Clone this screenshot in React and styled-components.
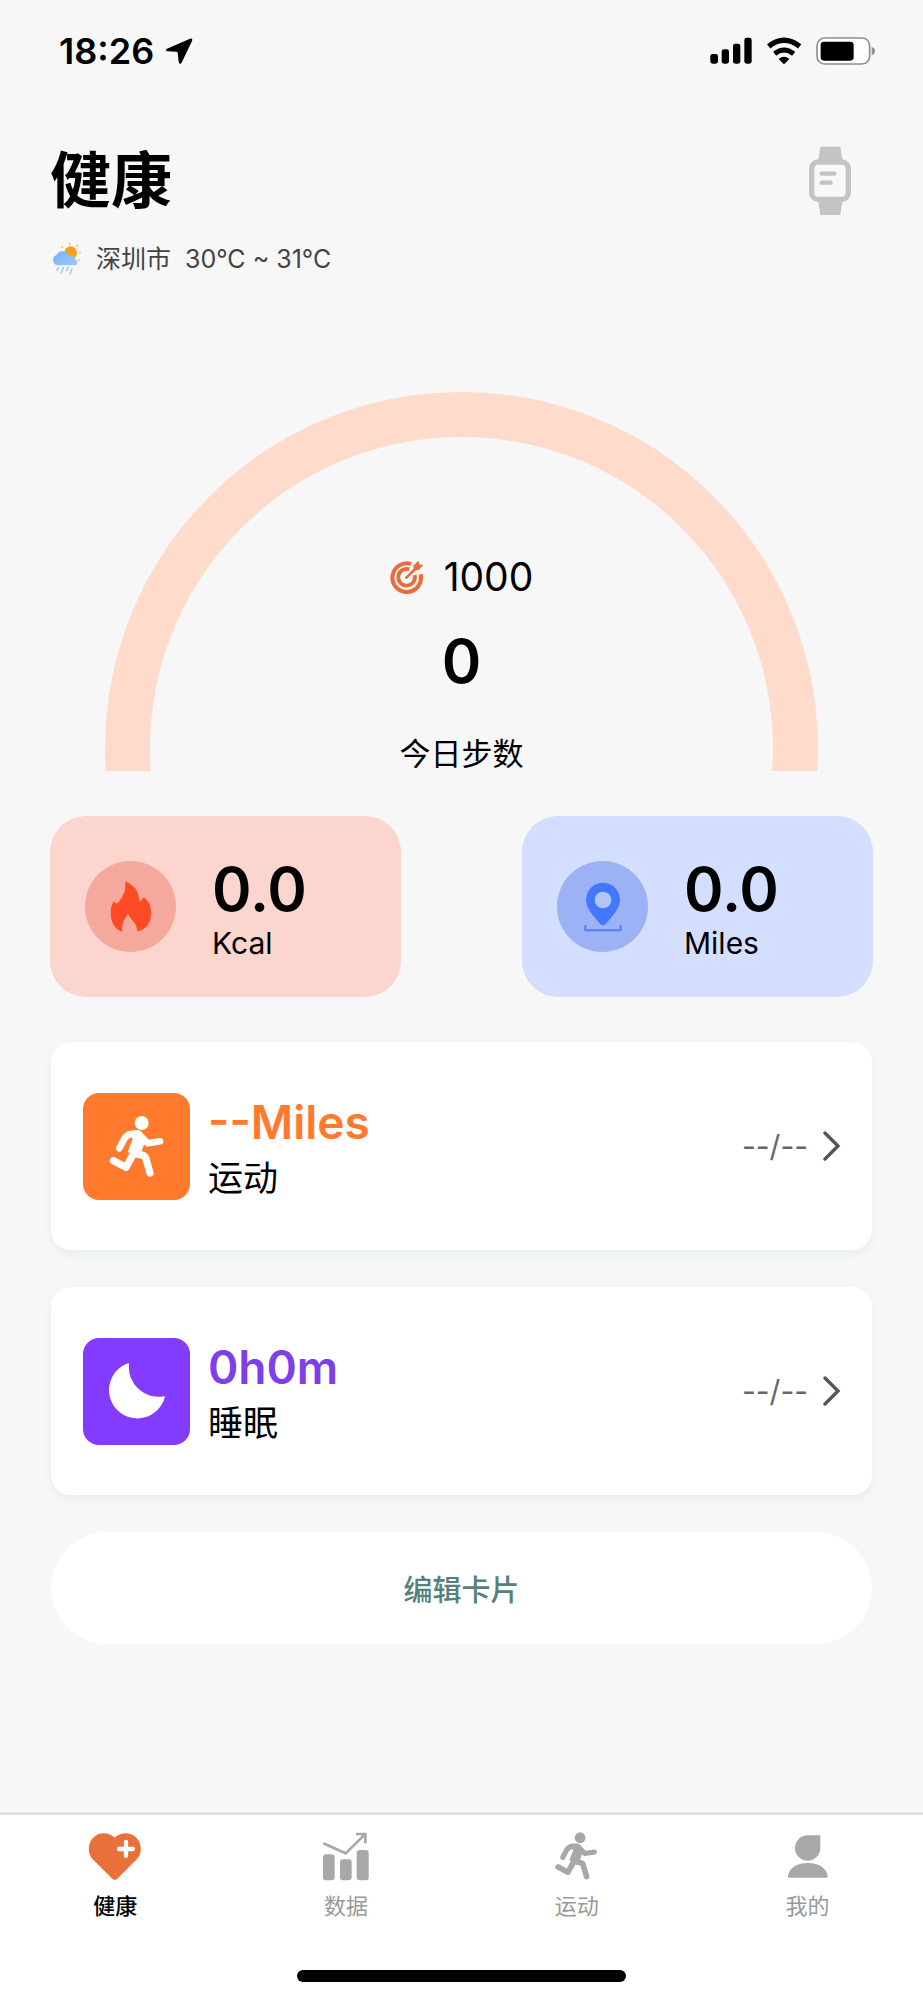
import styled, { createGlobalStyle } from "styled-components";

const GlobalStyle = createGlobalStyle`
  * {
    box-sizing: border-box;
  }
  body {
    margin: 0;
    background: #f7f7f7;
    color: #000;
    font-family: "Inter", "Noto Sans CJK SC", sans-serif;
  }
`;

/* ---------- icons ---------- */

const LocationIcon = () => (
  <svg width="28" height="28" viewBox="402 50 86 86" aria-hidden="true">
    <path d="M479 55Q488 53 485 62L453 129Q447 137 444 127L441 99Q440 95 436 95L410 94Q400 91 408 86Z" />
  </svg>
);

const SignalIcon = () => (
  <svg width="42" height="28" viewBox="61 51 126 84" aria-hidden="true">
    <rect x="62" y="102" width="23" height="29" rx="7" />
    <rect x="96" y="88" width="22" height="43" rx="7" />
    <rect x="130" y="71" width="22" height="60" rx="7" />
    <rect x="164" y="53" width="22" height="78" rx="7" />
  </svg>
);

const WifiIcon = () => (
  <svg width="36" height="28" viewBox="228 49 108 84" aria-hidden="true">
    <path d="M236 77Q282 41 329 77" fill="none" stroke="#000" strokeWidth="16" />
    <path d="M254 99Q282 77 311 99" fill="none" stroke="#000" strokeWidth="15" />
    <path d="M266 115Q282 101 298 115L284 129Q282 131 280 129Z" />
  </svg>
);

const BatteryIcon = () => (
  <svg width="60" height="28" viewBox="378 49 180 84" aria-hidden="true">
    <rect x="381" y="52" width="158" height="78" rx="23" fill="#fdfdfd" stroke="#8f8f8f" strokeWidth="5" />
    <rect x="392" y="63" width="99" height="57" rx="10" />
    <path d="M545 79Q555 82 555 91T545 104Z" fill="#8f8f8f" />
  </svg>
);

const WatchIcon = () => (
  <svg width="42" height="70" viewBox="354 379 126 210" aria-hidden="true">
    <path d="M388 381H448L455 425H381ZM381 540H455L448 586H388Z" fill="#c4c4c4" />
    <rect x="362" y="427" width="110" height="112" rx="20" fill="#f8f8f8" stroke="#c4c4c4" strokeWidth="16" />
    <path d="M392 462H430M392 489H419" stroke="#c4c4c4" strokeWidth="13" strokeLinecap="round" />
  </svg>
);

const WeatherIcon = () => (
  <svg width="30" height="34" viewBox="71 665 90 102" aria-hidden="true">
    <defs>
      <linearGradient id="cloud" x1="0" y1="0" x2="1" y2="1">
        <stop offset="0" stopColor="#74aef5" />
        <stop offset="1" stopColor="#9fcbfb" />
      </linearGradient>
    </defs>
    <circle cx="127" cy="697" r="19" fill="#f9a01b" />
    <g stroke="#f7b24a" strokeWidth="4" strokeLinecap="round">
      <path d="M124 669v2M101 680l2 2M147 675l-2 2M154 697h2M151 718l2 2" />
    </g>
    <path
      d="M89 735A16 16 0 0 1 85 704A20 20 0 0 1 122 707A14 14 0 0 1 141 717A10 10 0 0 1 142 735Z"
      fill="url(#cloud)"
    />
    <g stroke="#92c2f6" strokeWidth="4" strokeLinecap="round">
      <path d="M90 742l-4 8M105 742l-7 17M120 741l-5 10M131 746l-6 15" />
    </g>
  </svg>
);

const TargetIcon = () => (
  <svg width="34" height="34" viewBox="56 59 102 102" fill="none" stroke="#e56b40" aria-hidden="true">
    <circle cx="106" cy="111" r="35" stroke="#fdeccb" strokeWidth="8" />
    <path d="M119 71A43 43 0 1 0 148 102" strokeWidth="12" />
    <path d="M114 87A25 25 0 1 0 130 104" strokeWidth="11" />
    <path d="M105 112L136 82" strokeWidth="8" strokeLinecap="round" />
    <path d="M126 76L141 61L144 72L156 75L141 90L128 90Z" fill="#e56b40" stroke="none" />
  </svg>
);

const FlameIcon = () => (
  <svg width="42" height="52" viewBox="209 243 126 156" aria-hidden="true">
    <path
      d="M258 245C282 256 296 275 297 303C302 303 306 299 309 291C326 302 333 320 332 341C332 370 315 390 290 394C293 372 271 362 262 340C257 356 242 366 246 395C222 388 211 366 211 337C211 320 217 309 221 303C223 308 226 311 231 310C246 294 259 271 254 248Q255 244 258 245Z"
      fill="#ff4a26"
    />
  </svg>
);

const PinIcon = () => (
  <svg width="38" height="52" viewBox="227 245 114 156" aria-hidden="true">
    <path
      d="M290 376Q284 380 278 376C262 356 233 330 233 301A51 51 0 0 1 335 301C335 330 306 356 290 376Z"
      fill="#4378fc"
    />
    <circle cx="284" cy="302" r="25" fill="#b4c5f5" />
    <path d="M231 377V393H337V377" fill="none" stroke="#4f7ff2" strokeWidth="6" />
  </svg>
);

const RunnerIcon = ({ width, height }) => (
  <svg
    width={width}
    height={height}
    viewBox="200 245 180 201"
    fill="none"
    stroke="currentColor"
    strokeLinecap="round"
    strokeLinejoin="round"
    aria-hidden="true"
  >
    <circle cx="304" cy="275" r="21" fill="currentColor" stroke="none" />
    <path d="M237 351L252 322Q262 307 280 307H294L322 336L359 330" strokeWidth="20" />
    <path d="M264 301Q280 296 304 303L317 322L304 360L282 372L262 362L277 324Z" fill="currentColor" stroke="none" />
    <path d="M219 388L257 408L280 366L309 372Q314 374 316 380L329 425" strokeWidth="22" />
  </svg>
);

const MoonIcon = () => (
  <svg width="58" height="58" viewBox="204 247 174 174" aria-hidden="true">
    <path d="M264 251Q268 249 267 254A89 89 0 0 0 372 350Q377 350 374 354A85 85 0 1 1 264 251Z" fill="#fff" />
  </svg>
);

const ChevronIcon = () => (
  <svg width="18" height="30" viewBox="369 152 54 90" aria-hidden="true">
    <path d="M375 158L414 197L375 236" fill="none" stroke="#555" strokeWidth="10" strokeLinecap="round" />
  </svg>
);

const HeartIcon = () => (
  <svg width="54" height="52" viewBox="88 90 162 156" aria-hidden="true">
    <path
      d="M161 236L102 178C87 162 87 135 100 117C119 94 151 96 168 113C185 96 217 94 236 116C250 134 250 162 235 177L176 236Q168 243 161 236Z"
      fill="#e8703a"
    />
    <path d="M202 126V167M181 147H223" stroke="#fff" strokeWidth="13" strokeLinecap="round" />
  </svg>
);

const ChartIcon = () => (
  <svg width="48" height="52" viewBox="789 90 144 156" fill="#a8a8a8" aria-hidden="true">
    <rect x="792" y="163" width="35" height="78" rx="9" />
    <rect x="843" y="178" width="35" height="63" rx="9" />
    <rect x="893" y="150" width="36" height="91" rx="9" />
    <path d="M793 130L860 160L917 104M891 102H919V130" fill="none" stroke="#a8a8a8" strokeWidth="8" />
  </svg>
);

const PersonIcon = () => (
  <svg width="42" height="52" viewBox="860 90 126 156" fill="#a8a8a8" aria-hidden="true">
    <path d="M922 106H960V144A38 38 0 1 1 922 106Z" />
    <path d="M865 233Q862 233 863 229C867 176 978 176 982 229Q982 233 979 233Z" />
  </svg>
);

/* ---------- data ---------- */

const stats = [
  { unit: "Kcal", value: "0.0", bg: "#fbd5ce", badge: "#f5a99d", icon: <FlameIcon /> },
  { unit: "Miles", value: "0.0", bg: "#d4deff", badge: "#9db2f5", icon: <PinIcon /> },
];

const records = [
  {
    name: "运动",
    value: "--Miles",
    date: "--/--",
    tile: "#ff7a2c",
    color: "#ff7a2c",
    icon: <RunnerIcon width={60} height={67} />,
  },
  { name: "睡眠", value: "0h0m", date: "--/--", tile: "#833cff", color: "#7c3fea", icon: <MoonIcon /> },
];

const tabs = [
  { label: "健康", icon: <HeartIcon />, active: true },
  { label: "数据", icon: <ChartIcon /> },
  { label: "运动", icon: <RunnerIcon width={47} height={52} /> },
  { label: "我的", icon: <PersonIcon /> },
];

function App() {
  return (
    <Page>
      <GlobalStyle />
      <StatusBar>
        <Clock>
          18:26
          <LocationIcon />
        </Clock>
        <StatusIcons>
          <SignalIcon />
          <WifiIcon />
          <BatteryIcon />
        </StatusIcons>
      </StatusBar>

      <Main>
        <Header>
          <Title>健康</Title>
          <WatchButton type="button" aria-label="手表">
            <WatchIcon />
          </WatchButton>
        </Header>
        <Weather>
          <WeatherIcon />
          <span>深圳市</span>
          <span>30°C ~ 31°C</span>
        </Weather>

        <Gauge>
          <GaugeArc viewBox="0 0 713 379" aria-hidden="true">
            <circle cx="356.5" cy="356.5" r="334" fill="none" stroke="#ffdbcc" strokeWidth="45" />
          </GaugeArc>
          <GaugeText>
            <Goal>
              <TargetIcon />
              1000
            </Goal>
            <Steps>0</Steps>
            <StepsLabel>今日步数</StepsLabel>
          </GaugeText>
        </Gauge>

        <Stats>
          {stats.map((s) => (
            <StatCard key={s.unit} $bg={s.bg}>
              <StatBadge $bg={s.badge}>{s.icon}</StatBadge>
              <div>
                <StatValue>{s.value}</StatValue>
                <StatUnit>{s.unit}</StatUnit>
              </div>
            </StatCard>
          ))}
        </Stats>

        <Records>
          {records.map((r) => (
            <RecordCard key={r.name} href="#">
              <RecordTile $bg={r.tile}>{r.icon}</RecordTile>
              <RecordText>
                <RecordValue $color={r.color}>{r.value}</RecordValue>
                <RecordName>{r.name}</RecordName>
              </RecordText>
              <RecordDate>{r.date}</RecordDate>
              <ChevronIcon />
            </RecordCard>
          ))}
          <EditButton type="button">编辑卡片</EditButton>
        </Records>
      </Main>

      <TabBar>
        <Tabs>
          {tabs.map((t) => (
            <Tab key={t.label} href="#" aria-current={t.active ? "page" : undefined}>
              {t.icon}
              <TabLabel $active={t.active}>{t.label}</TabLabel>
            </Tab>
          ))}
        </Tabs>
        <HomeIndicator />
      </TabBar>
    </Page>
  );
}

const Page = styled.div`
  display: flex;
  flex-direction: column;
  min-height: 100vh;
`;

const StatusBar = styled.div`
  display: flex;
  align-items: center;
  justify-content: space-between;
  height: 102px;
  padding: 0 47px 0 59px;
`;

const Clock = styled.div`
  display: flex;
  align-items: center;
  gap: 11px;
  font-size: 36px;
  font-weight: 600;
  line-height: 40px;
`;

const StatusIcons = styled.div`
  display: flex;
  align-items: center;
  gap: 14px;
`;

const Main = styled.main`
  flex: 1;
  display: flex;
  flex-direction: column;
  padding: 43px 50px 48px;
`;

const Header = styled.header`
  display: flex;
  align-items: center;
  justify-content: space-between;
  padding-right: 22px;
`;

const Title = styled.h1`
  margin: 0;
  font-size: 61px;
  font-weight: 700;
  line-height: 72px;
`;

const WatchButton = styled.button`
  display: flex;
  padding: 0;
  border: none;
  background: none;
  cursor: pointer;
`;

const Weather = styled.div`
  display: flex;
  align-items: center;
  gap: 14px;
  margin-top: 25px;
  padding-left: 2px;
  color: #444;
  font-size: 25px;
  line-height: 32px;
`;

const Gauge = styled.section`
  display: grid;
  align-self: center;
  width: 100%;
  max-width: 713px;
  margin-top: 116px;

  > * {
    grid-area: 1 / 1;
  }
`;

const GaugeArc = styled.svg`
  display: block;
  width: 100%;
`;

const GaugeText = styled.div`
  display: flex;
  flex-direction: column;
  align-items: center;
  align-self: end;
`;

const Goal = styled.div`
  display: flex;
  align-items: center;
  gap: 20px;
  font-size: 39px;
  line-height: 48px;
`;

const Steps = styled.div`
  margin: 24px 0 40px;
  font-size: 60px;
  font-weight: 600;
  line-height: 72px;
`;

const StepsLabel = styled.div`
  font-size: 31px;
  line-height: 34px;
`;

const Stats = styled.section`
  display: grid;
  grid-template-columns: 1fr 1fr;
  gap: 121px;
  margin-top: 45px;

  @media screen and (max-width: 860px) {
    gap: 24px;
  }
`;

const StatCard = styled.div`
  display: flex;
  align-items: center;
  gap: 36px;
  height: 181px;
  padding: 0 35px;
  border-radius: 36px;
  background: ${(p) => p.$bg};
`;

const StatBadge = styled.div`
  display: flex;
  align-items: center;
  justify-content: center;
  flex-shrink: 0;
  width: 91px;
  height: 91px;
  border-radius: 50%;
  background: ${(p) => p.$bg};
`;

const StatValue = styled.div`
  font-size: 60px;
  font-weight: 600;
  line-height: 72px;
`;

const StatUnit = styled.div`
  font-size: 30px;
  line-height: 36px;
`;

const Records = styled.section`
  display: flex;
  flex-direction: column;
  gap: 37px;
  margin: 45px 1px 0;
`;

const RecordCard = styled.a`
  display: flex;
  align-items: center;
  height: 208px;
  padding: 0 31px 0 32px;
  border-radius: 20px;
  background: #fff;
  box-shadow: 0 4px 10px rgba(80, 130, 125, 0.08);
  color: inherit;
  text-decoration: none;
`;

const RecordTile = styled.div`
  display: flex;
  align-items: center;
  justify-content: center;
  flex-shrink: 0;
  width: 107px;
  height: 107px;
  border-radius: 16px;
  background: ${(p) => p.$bg};
  color: #fff;
`;

const RecordText = styled.div`
  flex: 1;
  margin-left: 18px;
`;

const RecordValue = styled.div`
  color: ${(p) => p.$color};
  font-size: 46px;
  font-weight: 600;
  line-height: 64px;
`;

const RecordName = styled.div`
  font-size: 35px;
  line-height: 48px;
`;

const RecordDate = styled.div`
  margin-right: 15px;
  color: #666;
  font-size: 30px;
  line-height: 36px;
`;

const EditButton = styled.button`
  height: 112px;
  border: none;
  border-radius: 56px;
  background: #fff;
  color: #55807b;
  font-family: inherit;
  font-size: 29px;
  font-weight: 500;
  cursor: pointer;
`;

const TabBar = styled.footer`
  display: flex;
  flex-direction: column;
  align-items: center;
  padding-bottom: 18px;
  border-top: 3px solid #e0e0e0;
  background: #fff;
`;

const Tabs = styled.nav`
  display: grid;
  grid-template-columns: repeat(4, 1fr);
  width: 100%;
  padding-top: 15px;
`;

const Tab = styled.a`
  display: flex;
  flex-direction: column;
  align-items: center;
  gap: 8px;
  color: #a8a8a8;
  text-decoration: none;
`;

const TabLabel = styled.span`
  color: ${(p) => (p.$active ? "#000" : "#999")};
  font-size: 22px;
  font-weight: ${(p) => (p.$active ? 500 : 400)};
  line-height: 32px;
`;

const HomeIndicator = styled.div`
  width: 329px;
  height: 12px;
  margin-top: 48px;
  border-radius: 6px;
  background: #000;
`;

export default App;
